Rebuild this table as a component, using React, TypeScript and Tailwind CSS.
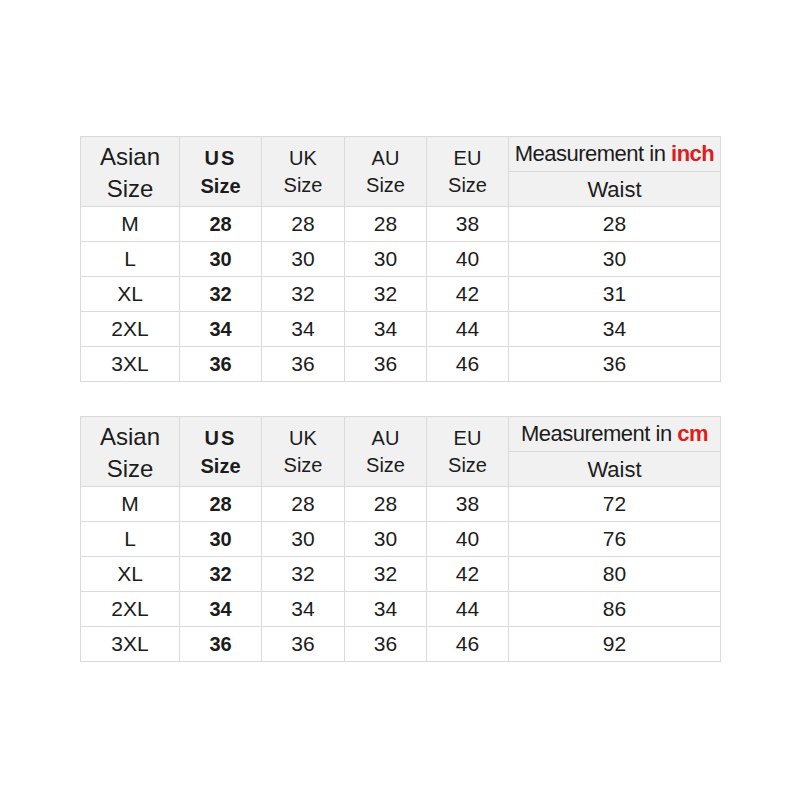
import React from 'react';

type Row = [string, string, string, string, string, string];

const inchRows: Row[] = [
  ['M', '28', '28', '28', '38', '28'],
  ['L', '30', '30', '30', '40', '30'],
  ['XL', '32', '32', '32', '42', '31'],
  ['2XL', '34', '34', '34', '44', '34'],
  ['3XL', '36', '36', '36', '46', '36'],
];

const cmRows: Row[] = [
  ['M', '28', '28', '28', '38', '72'],
  ['L', '30', '30', '30', '40', '76'],
  ['XL', '32', '32', '32', '42', '80'],
  ['2XL', '34', '34', '34', '44', '86'],
  ['3XL', '36', '36', '36', '46', '92'],
];

const cell = 'border border-[#dadada] text-center align-middle p-0';

const SizeTable: React.FC<{ unit: string; rows: Row[] }> = ({ unit, rows }) => (
  <table className="border-collapse table-fixed w-[640px] text-[#1c1c1c] font-[Liberation_Sans,Arial,sans-serif]">
    <colgroup>
      <col className="w-[99px]" />
      <col className="w-[82px]" />
      <col className="w-[83px]" />
      <col className="w-[82px]" />
      <col className="w-[82px]" />
      <col className="w-[212px]" />
    </colgroup>
    <thead>
      <tr className="h-[35px] bg-[#f1f1f1]">
        <th rowSpan={2} className={`${cell} font-normal text-[24px] leading-[32px] pt-[2px]`}>
          Asian
          <br />
          Size
        </th>
        <th rowSpan={2} className={`${cell} font-bold text-[20px] leading-[28px]`}>
          <span className="tracking-[2px]">US</span>
          <br />
          Size
        </th>
        <th rowSpan={2} className={`${cell} font-normal text-[20px] leading-[27px]`}>
          UK
          <br />
          Size
        </th>
        <th rowSpan={2} className={`${cell} font-normal text-[20px] leading-[27px]`}>
          AU
          <br />
          Size
        </th>
        <th rowSpan={2} className={`${cell} font-normal text-[20px] leading-[27px]`}>
          EU
          <br />
          Size
        </th>
        <th className={`${cell} font-normal text-[22px] tracking-[-0.5px] leading-none`}>
          Measurement in <span className="font-bold text-[#e01b1b]">{unit}</span>
        </th>
      </tr>
      <tr className="h-[35px] bg-[#f1f1f1]">
        <th className={`${cell} font-normal text-[22px]`}>Waist</th>
      </tr>
    </thead>
    <tbody>
      {rows.map((r) => (
        <tr key={r[0]} className="h-[35px] bg-white text-[21px]">
          <td className={cell}>{r[0]}</td>
          <td className={`${cell} font-bold text-[20px]`}>{r[1]}</td>
          <td className={cell}>{r[2]}</td>
          <td className={cell}>{r[3]}</td>
          <td className={cell}>{r[4]}</td>
          <td className={cell}>{r[5]}</td>
        </tr>
      ))}
    </tbody>
  </table>
);

const App: React.FC = () => {
  return (
    <div className="w-[800px] h-[800px] bg-white pt-[136px] pl-[80px] flex flex-col gap-[34px]">
      <SizeTable unit="inch" rows={inchRows} />
      <SizeTable unit="cm" rows={cmRows} />
    </div>
  );
};

export default App;
